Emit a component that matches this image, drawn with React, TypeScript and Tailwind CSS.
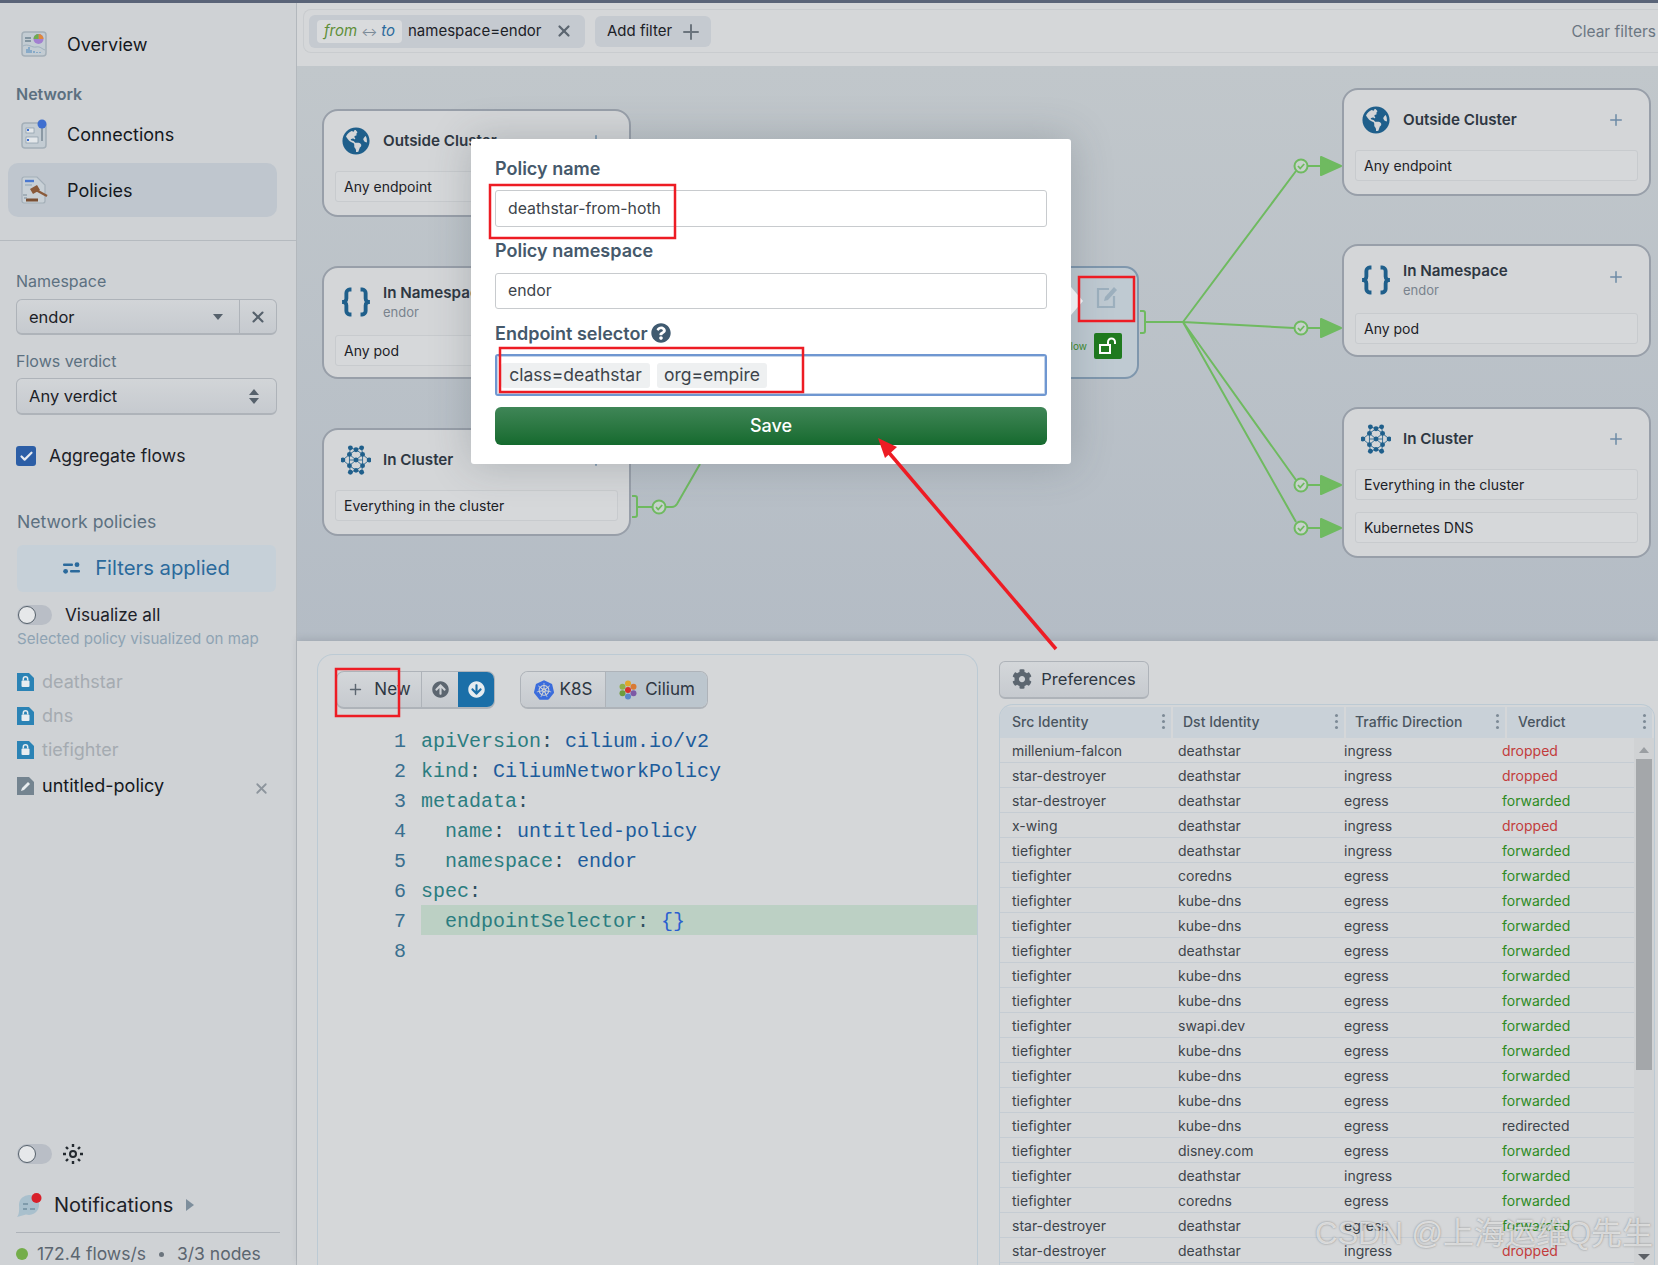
import type { ReactNode } from "react";
import { Check, Plus, X } from "lucide-react";
import { FaArrowCircleDown, FaArrowCircleUp, FaCog, FaGlobeAmericas, FaQuestionCircle } from "react-icons/fa";
import { SiKubernetes } from "react-icons/si";

function OverviewIcon() {
    return (
        <svg width="26" height="26" viewBox="0 0 26 26">
            <rect x="1" y="1" width="24" height="24" rx="3" fill="#c3ccd3" stroke="#a4afb8" strokeWidth="1.5"/>
            <path d="M4 7h6M4 10h6" stroke="#6f8291" strokeWidth="1.5"/>
            <path d="M2 15c5-3 9 2 13 1s6 2 9 3" fill="none" stroke="#9fb0bd" strokeWidth="1"/>
            <path d="M6 22v-4M8 22v-6M10 22v-3M13 22v-2M16 22v-1M19 22v-1" stroke="#6f9cc4" strokeWidth="1.4"/>
            <circle cx="17.5" cy="8" r="5" fill="#a27fd0"/>
            <path d="M17.5 8V3a5 5 0 0 1 5 5z" fill="#e0873a"/>
            <path d="M17.5 8V3a5 5 0 0 0-5 5z" fill="#6dad4e"/>
        </svg>
    );
}

function ConnectionsIcon() {
    return (
        <svg width="28" height="30" viewBox="0 0 28 30">
            <rect x="1" y="4" width="24" height="25" rx="3" fill="#c3ccd3" stroke="#a4afb8" strokeWidth="1.5"/>
            <rect x="5" y="9" width="8" height="5" fill="#e3e7ea" stroke="#8a9aa8" strokeWidth="0.7"/>
            <rect x="5" y="18" width="12" height="6" fill="#e3e7ea" stroke="#8a9aa8" strokeWidth="0.7"/>
            <rect x="6" y="10" width="2" height="2" fill="#3f6fd0"/>
            <rect x="6" y="20" width="2" height="2" fill="#3f6fd0"/>
            <path d="M21 8v14" stroke="#7d8c99" strokeWidth="1.6"/>
            <circle cx="21" cy="5" r="4.5" fill="#3f6fd0"/>
        </svg>
    );
}

function PoliciesIcon() {
    return (
        <svg width="28" height="28" viewBox="0 0 28 28">
            <path d="M1 3a2 2 0 0 1 2-2h13l8 8v16a2 2 0 0 1-2 2H3a2 2 0 0 1-2-2z" fill="#c8d0d6" stroke="#a4afb8" strokeWidth="1.2"/>
            <path d="M4 5h9" stroke="#4a78d0" strokeWidth="2.4"/>
            <path d="M4 9h7" stroke="#9fb0bd" strokeWidth="1.4"/>
            <path d="M9 13l7-4 3 5-7 4z" fill="#8a5a3a"/>
            <path d="M15 14l11 6" stroke="#8a5a3a" strokeWidth="2.4"/>
            <path d="M5 24h12" stroke="#7a4f33" strokeWidth="3"/>
            <path d="M2 19h4M3 22h3" stroke="#7d8c99" strokeWidth="1"/>
        </svg>
    );
}

function FiltersIcon() {
    return (
        <svg width="17" height="12" viewBox="0 0 17 12" fill="#2b6a9c">
            <rect x="0" y="1.5" width="10" height="2.4" rx="1"/>
            <circle cx="14" cy="2.7" r="2.4"/>
            <circle cx="2.6" cy="9.3" r="2.4"/>
            <rect x="7" y="8.1" width="10" height="2.4" rx="1"/>
        </svg>
    );
}

function PolicyFileIcon({locked}: {locked: boolean}) {
    return (
        <svg width="17" height="19" viewBox="0 0 17 19">
            <path d="M0 1h12l5 5v13H0z" fill={locked ? "#2b83b5" : "#748490"}/>
            {locked ? (
                <g>
                    <rect x="4.5" y="8.5" width="8" height="6.5" rx="1" fill="#e8edf0"/>
                    <path d="M6.3 8.5V7a2.2 2.2 0 0 1 4.4 0v1.5" fill="none" stroke="#e8edf0" strokeWidth="1.5"/>
                </g>
            ) : (
                <path d="M4 15l1-3 6-6 2 2-6 6z" fill="#e8edf0"/>
            )}
        </svg>
    );
}

function NotificationIcon() {
    return (
        <svg width="26" height="25" viewBox="0 0 26 25">
            <path d="M2 12a10 10 0 1 1 7 9.5L0 24c1.500-2 2.500-4 2-12z" fill="#a9c0cd"/>
            <path d="M6 11h5M6 16h4M13 16h5" stroke="#7f9bab" strokeWidth="1.8"/>
            <circle cx="19.500" cy="5" r="5" fill="#d8202a"/>
        </svg>
    );
}

function ClusterIcon() {
    const dots = [[10, 3], [16, 5], [22, 3], [9, 10], [23, 10], [2, 16], [16, 16], [30, 16], [9, 22], [23, 22], [10, 29], [16, 27], [22, 29]];
    return (
        <svg width="32" height="32" viewBox="0 0 32 32">
            <path d="M10 3l6 2 6-2M9 10l7-5 7 5M2 16l7-6v12zM30 16l-7-6v12zM9 10l7 6 7-6M9 22l7-6 7 6M9 22l7 5 7-5M10 29l6-2 6 2M10 3l-1 7M22 3l1 7M10 29l-1-7M22 29l1-7M9 16h14" fill="none" stroke="#1f5f8b" strokeWidth="0.9"/>
            {dots.map(([x, y]) => <circle key={`${x}-${y}`} cx={x} cy={y} r="2.6" fill="#1f5f8b"/>)}
        </svg>
    );
}

function BracesIcon() {
    return (
        <svg width="34" height="30" viewBox="0 0 30 26" fill="none" stroke="#1f5f8b" strokeWidth="3.400" className="shrink-0">
            <path d="M11 2H9.500a3 3 0 0 0-3 3v5a3 3 0 0 1-3.500 3 3 3 0 0 1 3.500 3v5a3 3 0 0 0 3 3H11"/>
            <path d="M19 2h1.500a3 3 0 0 1 3 3v5a3 3 0 0 0 3.500 3 3 3 0 0 0-3.500 3v5a3 3 0 0 1-3 3H19"/>
        </svg>
    );
}

function EditIcon() {
    return (
        <svg width="22" height="24" viewBox="0 0 22 24" fill="none" className="mt-[17px] mr-[19px]">
            <path d="M13 4H2v18h16V11" stroke="#9db0be" strokeWidth="2.200"/>
            <path d="M8 16l1-4 9-10 3 3-9 10z" fill="#9db0be"/>
        </svg>
    );
}

function OpenLockIcon() {
    return (
        <svg width="20" height="18" viewBox="0 0 20 18" fill="none" stroke="white" strokeWidth="2">
            <rect x="2" y="8" width="10" height="8"/>
            <path d="M10 8V5a3.500 3.500 0 0 1 7 0v2"/>
        </svg>
    );
}

function SunIcon() {
    return (
        <svg width="20" height="20" viewBox="0 0 20 20" fill="none" stroke="#23292f" strokeWidth="2.400">
            <circle cx="10" cy="10" r="3" strokeWidth="2"/>
            <path d="M10 0v3M10 17v3M0 10h3M17 10h3M3 3l2 2M15 15l2 2M3 17l2-2M15 5l2-2"/>
        </svg>
    );
}

function CiliumIcon() {
    return (
        <svg width="20" height="20" viewBox="0 0 20 20">
            <circle cx="10" cy="3.500" r="3" fill="#e0a82e"/>
            <circle cx="15.500" cy="6.800" r="3" fill="#d97a34"/>
            <circle cx="15.500" cy="13.200" r="3" fill="#7d5aa6"/>
            <circle cx="10" cy="16.500" r="3" fill="#5b86c9"/>
            <circle cx="4.500" cy="13.200" r="3" fill="#6f9c3e"/>
            <circle cx="4.500" cy="6.800" r="3" fill="#8fb04a"/>
            <circle cx="10" cy="10" r="3" fill="#d8302c"/>
        </svg>
    );
}

function Toggle() {
    return (
        <div className="w-[35px] h-[20px] rounded-full bg-[#b9bec6] flex items-center">
            <div className="w-[18px] h-[18px] ml-px rounded-full bg-[#e6e8ea] border border-[#55606a]"></div>
        </div>
    );
}

interface NodeCardProps {
    title: string
    sub?: string
    icon: ReactNode
    items: string[]
    className: string
}

function NodeCard(props: NodeCardProps) {
    return (
        <div className={`absolute w-[309px] bg-[#d4d6d8] border-2 border-[#989fa9] rounded-[16px] px-[11px] ${props.sub ? "pb-[11px]" : "pb-[13px]"} ${props.className}`}>
            <div className={`flex items-center ${props.sub ? "h-[67px]" : "h-[60px]"}`}>
                <div className="w-[30px] ml-[6px] flex justify-center">{props.icon}</div>
                <div className="ml-[12px] flex-1">
                    <div className="text-[15.200px] leading-[20px] font-semibold text-[#2e3742]">{props.title}</div>
                    {props.sub && <div className="text-[13px] leading-[18px] text-[#79838d]">{props.sub}</div>}
                </div>
                <Plus size={18} strokeWidth={2} className={`text-[#6d8ba6] mr-[13px] ${props.sub ? "mb-[6px]" : ""}`}/>
            </div>
            <div className="flex flex-col gap-[12px]">
                {props.items.map((item) => (
                    <div key={item} className="h-[31px] flex items-center px-[8px] bg-[#d6d8da] border border-[#c8cbce] rounded-[3px] text-[14px] text-[#1c2127]">
                        {item}
                    </div>
                ))}
            </div>
        </div>
    );
}

const codeLines: {indent?: boolean, k: string, v?: string, brace?: boolean}[] = [
    {k: "apiVersion", v: "cilium.io/v2"},
    {k: "kind", v: "CiliumNetworkPolicy"},
    {k: "metadata"},
    {indent: true, k: "name", v: "untitled-policy"},
    {indent: true, k: "namespace", v: "endor"},
    {k: "spec"},
    {indent: true, k: "endpointSelector", brace: true},
];

const flows = [
    ["millenium-falcon", "deathstar", "ingress", "dropped"],
    ["star-destroyer", "deathstar", "ingress", "dropped"],
    ["star-destroyer", "deathstar", "egress", "forwarded"],
    ["x-wing", "deathstar", "ingress", "dropped"],
    ["tiefighter", "deathstar", "ingress", "forwarded"],
    ["tiefighter", "coredns", "egress", "forwarded"],
    ["tiefighter", "kube-dns", "egress", "forwarded"],
    ["tiefighter", "kube-dns", "egress", "forwarded"],
    ["tiefighter", "deathstar", "egress", "forwarded"],
    ["tiefighter", "kube-dns", "egress", "forwarded"],
    ["tiefighter", "kube-dns", "egress", "forwarded"],
    ["tiefighter", "swapi.dev", "egress", "forwarded"],
    ["tiefighter", "kube-dns", "egress", "forwarded"],
    ["tiefighter", "kube-dns", "egress", "forwarded"],
    ["tiefighter", "kube-dns", "egress", "forwarded"],
    ["tiefighter", "kube-dns", "egress", "redirected"],
    ["tiefighter", "disney.com", "egress", "forwarded"],
    ["tiefighter", "deathstar", "ingress", "forwarded"],
    ["tiefighter", "coredns", "egress", "forwarded"],
    ["star-destroyer", "deathstar", "egress", "forwarded"],
    ["star-destroyer", "deathstar", "ingress", "dropped"],
];

function verdictColor(verdict: string) {
    if (verdict === "dropped") return "text-[#c23c3c]";
    if (verdict === "forwarded") return "text-[#2e8b1f]";
    return "text-[#3d444b]";
}

function FlowDot({x, y}: {x: number, y: number}) {
    return (
        <g>
            <circle cx={x} cy={y} r="6.500" fill="#c8d2cc" stroke="#6fba60" strokeWidth="2"/>
            <path d={`M${x - 3} ${y}l2.200 2.500 4-4.500`} fill="none" stroke="#6fba60" strokeWidth="1.800"/>
        </g>
    );
}

function Sidebar() {
    return (
        <aside className="w-[297px] shrink-0 h-[1262px] bg-[#cfd2d5] border-r border-[#b3b8bd] flex flex-col pt-[14px] pb-px overflow-hidden">
            <div className="h-[54px] flex items-center pl-[21px] gap-[20px] text-[18px] text-[#14181d]">
                <OverviewIcon/>Overview
            </div>
            <div className="mt-[13px] ml-[16px] h-[20px] leading-[20px] text-[16px] font-semibold text-[#5c7080]">Network</div>
            <div className="mt-[3px] h-[54px] flex items-center pl-[21px] gap-[18px] text-[18px] text-[#14181d]">
                <ConnectionsIcon/>Connections
            </div>
            <div className="mt-[2px] mx-[8px] w-[269px] h-[54px] flex items-center pl-[13px] gap-[18px] rounded-[10px] bg-[#bfc6ce] text-[18px] text-[#14181d]">
                <PoliciesIcon/>Policies
            </div>
            <div className="mt-[23px] h-px bg-[#b5babf]"></div>

            <div className="mt-[30px] ml-[16px] h-[20px] leading-[20px] text-[16px] text-[#5c7080]">Namespace</div>
            <div className="mt-[8px] mx-[16px] w-[261px] h-[36px] flex rounded-[6px] border border-[#aeb3b9] border-b-2 bg-gradient-to-b from-[#d2d5d8] to-[#c6cacf] text-[16.500px] text-[#1c2127]">
                <div className="flex-1 flex items-center justify-between pl-[12px] pr-[16px] pt-px border-r border-[#aeb3b9]">
                    endor
                    <div className="w-0 h-0 border-x-[5px] border-x-transparent border-t-[6px] border-t-[#56616c]"></div>
                </div>
                <div className="w-[36px] flex items-center justify-center"><X size={18} strokeWidth={2.800} className="text-[#56616c]"/></div>
            </div>
            <div className="mt-[16px] ml-[16px] h-[20px] leading-[20px] text-[16px] text-[#5c7080]">Flows verdict</div>
            <div className="mt-[7px] mx-[16px] w-[261px] h-[37px] flex items-center justify-between pl-[12px] pr-[17px] rounded-[6px] border border-[#aeb3b9] border-b-2 bg-gradient-to-b from-[#d2d5d8] to-[#c6cacf] text-[16.500px] text-[#1c2127]">
                Any verdict
                <div className="flex flex-col gap-[3px]">
                    <div className="w-0 h-0 border-x-[5px] border-x-transparent border-b-[6px] border-b-[#56616c]"></div>
                    <div className="w-0 h-0 border-x-[5px] border-x-transparent border-t-[6px] border-t-[#56616c]"></div>
                </div>
            </div>
            <div className="mt-[31px] ml-[16px] h-[20px] flex items-center gap-[13px] text-[17.600px] text-[#1c2127]">
                <div className="w-[20px] h-[20px] rounded-[3px] bg-[#2c5ea6] flex items-center justify-center">
                    <Check size={15} strokeWidth={3.500} className="text-[#e6eaf0]"/>
                </div>
                <span className="pt-px">Aggregate flows</span>
            </div>

            <div className="mt-[46px] ml-[17px] h-[20px] leading-[20px] text-[17.600px] text-[#5c7080]">Network policies</div>
            <div className="mt-[13px] ml-[17px] w-[259px] h-[47px] flex items-center justify-center gap-[15px] pb-px rounded-[6px] bg-[#c6d0d8] text-[20.300px] text-[#2b6a9c]">
                <FiltersIcon/>Filters applied
            </div>
            <div className="mt-[13px] ml-[17px] h-[20px] flex items-center gap-[13px] text-[17.200px] text-[#1c2127]">
                <Toggle/>Visualize all
            </div>
            <div className="mt-[5px] ml-[17px] h-[18px] leading-[18px] text-[15.100px] text-[#8ea3b3]">Selected policy visualized on map</div>
            <div className="mt-[16px] ml-[17px] flex flex-col">
                {["deathstar", "dns", "tiefighter"].map((name) => (
                    <div key={name} className="h-[34px] flex items-center gap-[8px] text-[18px] text-[#a5abb1]">
                        <PolicyFileIcon locked={true}/>{name}
                    </div>
                ))}
                <div className="mt-[2px] h-[34px] flex items-center gap-[8px] text-[18px] text-[#14181d]">
                    <PolicyFileIcon locked={false}/>untitled-policy
                    <X size={17} strokeWidth={2.500} className="ml-[81px] mt-[6px] text-[#8d959d]"/>
                </div>
            </div>

            <div className="mt-auto ml-[17px] h-[20px] flex items-center gap-[11px]">
                <Toggle/>
                <SunIcon/>
            </div>
            <div className="mt-[29px] ml-[17px] h-[24px] flex items-center gap-[11px] text-[20px] text-[#1c2127]">
                <NotificationIcon/>
                Notifications
                <div className="w-0 h-0 ml-[2px] border-y-[6px] border-y-transparent border-l-[8px] border-l-[#7d8e9c]"></div>
            </div>
            <div className="mt-[15px] mx-[16px] h-px bg-[#aeb3b9]"></div>
            <div className="mt-[11px] ml-[16px] h-[20px] flex items-center text-[17.500px] text-[#5c6670]">
                <div className="w-[12px] h-[12px] rounded-full bg-[#74ad4a] mr-[9px]"></div>
                172.4 flows/s
                <div className="w-[5px] h-[5px] rounded-full bg-[#6b747d] mx-[13px]"></div>
                3/3 nodes
            </div>
        </aside>
    );
}

function FilterBar() {
    return (
        <div className="h-[63px] bg-[#d5d7d9] pt-[6px] pl-[6px]">
            <div className="h-[44px] flex items-center rounded-l-[8px] border border-r-0 border-[#c9cccf] pl-[5px] pr-[2px] text-[15px] text-[#1c2127]">
                <div className="w-[276px] h-[33px] flex items-center rounded-[6px] bg-[#c5cad0] pl-[8px] pt-px">
                    <div className="w-[85px] h-[23px] flex items-center justify-center gap-[4px] rounded-[4px] bg-[#d9dbdd] italic">
                        <span className="text-[#5f8f3a]">from</span>
                        <span className="not-italic text-[12px] text-[#7a8a98]">↔</span>
                        <span className="text-[#2b6a9c]">to</span>
                    </div>
                    <span className="ml-[6px]">namespace=endor</span>
                    <X size={18} strokeWidth={3} className="ml-[13px] -mt-[2px] text-[#5c6670]"/>
                </div>
                <div className="ml-[10px] w-[116px] h-[31px] flex items-center rounded-[6px] bg-[#c5cad0] pl-[12px] pt-px gap-[7px]">
                    Add filter
                    <Plus size={24} strokeWidth={2} className="text-[#6b747d]"/>
                </div>
                <div className="ml-auto pt-px text-[15.500px] text-[#6b7682]">Clear filters</div>
            </div>
        </div>
    );
}

function FlowMap() {
    return (
        <div className="relative h-[575px] bg-gradient-to-b from-[#c1c7cb] to-[#b4bcc5] overflow-hidden">
            <NodeCard className="left-[25px] top-[43px]" title="Outside Cluster" icon={<FaGlobeAmericas size={28} className="text-[#1f5f8b]"/>} items={["Any endpoint"]}/>
            <NodeCard className="left-[25px] top-[200px]" title="In Namespace" sub="endor" icon={<BracesIcon/>} items={["Any pod"]}/>
            <NodeCard className="left-[25px] top-[362px]" title="In Cluster" icon={<ClusterIcon/>} items={["Everything in the cluster"]}/>

            <div className="absolute left-[700px] top-[200px] w-[142px] h-[113px] rounded-[14px] border-2 border-[#7f97ad] bg-[#bfcad2] flex flex-col items-end">
                <EditIcon/>
                <div className="mt-[24px] mr-[15px] flex items-center gap-[7px]">
                    <span className="text-[10px] text-[#3c8a2e]">Allow</span>
                    <div className="w-[28px] h-[26px] rounded-[2px] bg-[#1f7a1f] flex items-center justify-center">
                        <OpenLockIcon/>
                    </div>
                </div>
            </div>

            <NodeCard className="left-[1045px] top-[22px]" title="Outside Cluster" icon={<FaGlobeAmericas size={28} className="text-[#1f5f8b]"/>} items={["Any endpoint"]}/>
            <NodeCard className="left-[1045px] top-[178px]" title="In Namespace" sub="endor" icon={<BracesIcon/>} items={["Any pod"]}/>
            <NodeCard className="left-[1045px] top-[341px]" title="In Cluster" icon={<ClusterIcon/>} items={["Everything in the cluster", "Kubernetes DNS"]}/>

            <svg className="absolute inset-0 pointer-events-none" width="1361" height="575" viewBox="297 66 1361 575" fill="none">
                <g stroke="#6fba60" strokeWidth="2">
                    <path d="M632 496h3a2 2 0 0 1 2 2v17a2 2 0 0 1-2 2h-3M637 507h16M665 507h7q3 0 5-3l23-40"/>
                    <path d="M1140 311h3a2 2 0 0 1 2 2v18a2 2 0 0 1-2 2h-3M1145 322h38"/>
                    <path d="M1183 322L1296 171M1183 322L1294 328M1183 322L1296 480M1183 322L1296 522"/>
                    <path d="M1308 166h12M1308 328h12M1308 485h12M1308 528h12"/>
                </g>
                <FlowDot x={659} y={507}/>
                <FlowDot x={1301} y={166}/>
                <FlowDot x={1301} y={328}/>
                <FlowDot x={1301} y={485}/>
                <FlowDot x={1301} y={528}/>
                <g fill="#6fba60" stroke="#6fba60" strokeWidth="2" strokeLinejoin="round">
                    <path d="M1321 157l20 9-20 9z"/>
                    <path d="M1321 319l20 9-20 9z"/>
                    <path d="M1321 476l20 9-20 9z"/>
                    <path d="M1321 519l20 9-20 9z"/>
                </g>
            </svg>
        </div>
    );
}

function PolicyEditor() {
    return (
        <div className="w-[661px] shrink-0 mt-[13px] ml-[20px] rounded-t-[16px] border border-b-0 border-[#bccad4]">
            <div className="mt-[16px] ml-[18px] flex text-[17px] text-[#2e3742] gap-[25px]">
                <div className="h-[38px] flex rounded-[8px] border border-[#aeb3b9] border-b-2 overflow-hidden bg-gradient-to-b from-[#d4d7da] to-[#c6cacf]">
                    <div className="w-[85px] flex items-center justify-center gap-[10px] border-r border-[#aeb3b9]">
                        <Plus size={17} strokeWidth={2} className="text-[#5c6670]"/>New
                    </div>
                    <div className="w-[36px] flex items-center justify-center">
                        <FaArrowCircleUp size={17} className="text-[#5c6670]"/>
                    </div>
                    <div className="w-[36px] flex items-center justify-center bg-[#1b6fa8]">
                        <FaArrowCircleDown size={17} className="text-[#e6ecf0]"/>
                    </div>
                </div>
                <div className="h-[38px] flex rounded-[8px] border border-[#aeb3b9] border-b-2 overflow-hidden">
                    <div className="w-[85px] flex items-center justify-center gap-[6px] border-r border-[#aeb3b9] bg-gradient-to-b from-[#d4d7da] to-[#c6cacf]">
                        <SiKubernetes size={20} className="text-[#3a6cdc]"/>K8S
                    </div>
                    <div className="w-[101px] flex items-center justify-center gap-[7px] bg-[#bcc6ce]">
                        <CiliumIcon/>Cilium
                    </div>
                </div>
            </div>
            <div className="mt-[18px] text-[20px] leading-[30px] [font-family:'Liberation_Mono',monospace]">
                {codeLines.map((line, i) => (
                    <div key={line.k} className="flex h-[30px]">
                        <div className="w-[88px] text-right text-[#3a6f8f]">{i + 1}</div>
                        <div className={`ml-[15px] flex-1 whitespace-pre ${i === 6 ? "-mt-[2px] h-[30px] pt-[2px] bg-[#bcd0c4]" : ""}`}>
                            <span className="text-[#2b7d80]">{line.indent ? "  " : ""}{line.k}</span>
                            <span className="text-[#2f4f5f]">:</span>
                            {line.v && <span className="text-[#1d5c9c]"> {line.v}</span>}
                            {line.brace && <span className="text-[#2a5fd0]"> {"{}"}</span>}
                        </div>
                    </div>
                ))}
                <div className="flex h-[30px]">
                    <div className="w-[88px] text-right text-[#3a6f8f]">8</div>
                </div>
            </div>
        </div>
    );
}

function FlowsTable() {
    const headers = [
        {name: "Src Identity", cls: "w-[173px] pl-[12px]"},
        {name: "Dst Identity", cls: "w-[173px] pl-[10px]"},
        {name: "Traffic Direction", cls: "w-[161px] pl-[9px]"},
        {name: "Verdict", cls: "flex-1 pl-[11px]"},
    ];
    return (
        <div className="w-[656px] shrink-0 ml-[21px] mt-[20px]">
            <div className="w-[150px] h-[38px] flex items-center justify-center gap-[9px] pb-px rounded-[6px] border border-[#aeb3b9] border-b-2 bg-gradient-to-b from-[#d4d7da] to-[#c6cacf] text-[16.500px] text-[#2e3742]">
                <FaCog size={20} className="text-[#5c6670]"/>Preferences
            </div>
            <div className="mt-[5px] rounded-t-[14px] border border-b-0 border-[#bccad4] pt-[2px] overflow-hidden">
                <div className="h-[31px] flex bg-[#c9d1d8] text-[14px] font-medium text-[#4a5560]">
                    {headers.map((h) => (
                        <div key={h.name} className={`flex items-center justify-between pr-[6px] pb-[3px] border-r-2 border-[#d5d7d9] ${h.cls}`}>
                            {h.name}
                            <div className="flex flex-col gap-[3px]">
                                <div className="w-[3px] h-[3px] rounded-full bg-[#7d8a96]"></div>
                                <div className="w-[3px] h-[3px] rounded-full bg-[#7d8a96]"></div>
                                <div className="w-[3px] h-[3px] rounded-full bg-[#7d8a96]"></div>
                            </div>
                        </div>
                    ))}
                </div>
                <div className="flex">
                    <div className="w-[634px] shrink-0">
                        {flows.map((row, i) => (
                            <div key={i} className="h-[25px] flex items-center border-b border-[#c5ccd3] text-[14px] text-[#3d444b]">
                                <div className="w-[178px] pl-[12px]">{row[0]}</div>
                                <div className="w-[166px]">{row[1]}</div>
                                <div className="w-[158px]">{row[2]}</div>
                                <div className={verdictColor(row[3])}>{row[3]}</div>
                            </div>
                        ))}
                    </div>
                    <div className="flex-1 bg-[#d0d2d4] flex flex-col items-center h-[527px]">
                        <div className="mt-[9px] w-0 h-0 border-x-[5px] border-x-transparent border-b-[6px] border-b-[#9a9ea2]"></div>
                        <div className="mt-[6px] w-[16px] h-[311px] bg-[#a4a7aa]"></div>
                        <div className="mt-auto mb-[5px] w-0 h-0 border-x-[6px] border-x-transparent border-t-[6px] border-t-[#5c6066]"></div>
                    </div>
                </div>
            </div>
        </div>
    );
}

function PolicyModal() {
    return (
        <div className="absolute left-[471px] top-[139px] w-[600px] bg-white rounded-[3px] px-[24px] pt-[18px] pb-[19px] shadow-[0_0_40px_rgba(60,70,80,0.25)] text-[16px] text-[#3d444b]">
            <div className="h-[24px] leading-[24px] text-[18px] font-semibold text-[#45596b]">Policy name</div>
            <div className="mt-[9px] h-[37px] flex items-center pl-[12px] rounded-[3px] border border-[#c8cbce] text-[15.800px]">deathstar-from-hoth</div>
            <div className="mt-[12px] h-[24px] leading-[24px] text-[18px] font-semibold text-[#45596b]">Policy namespace</div>
            <div className="mt-[10px] h-[36px] flex items-center pl-[12px] rounded-[3px] border border-[#c8cbce] text-[15.800px]">endor</div>
            <div className="mt-[12px] h-[24px] flex items-center gap-[3px] text-[18px] font-semibold text-[#45596b]">
                Endpoint selector
                <FaQuestionCircle size={20} className="text-[#3f5a70]"/>
            </div>
            <div className="mt-[9px] h-[42px] flex items-center gap-[7px] pl-[4px] rounded-[3px] border-2 border-[#6f97d1] shadow-[inset_0_0_0_1px_#c4d4ea] text-[17.500px]">
                <div className="w-[149px] h-[25px] flex items-center justify-center rounded-[3px] bg-[#eef0f1]">class=deathstar</div>
                <div className="w-[110px] h-[25px] flex items-center justify-center rounded-[3px] bg-[#eef0f1]">org=empire</div>
            </div>
            <div className="mt-[11px] h-[38px] flex items-center justify-center pb-px rounded-[6px] bg-gradient-to-b from-[#3f8657] to-[#146a2e] text-[18px] font-medium text-white">Save</div>
        </div>
    );
}

function Annotations() {
    return (
        <svg className="absolute inset-0 pointer-events-none" width="1658" height="1265" viewBox="0 0 1658 1265" fill="none">
            <path d="M1071 287l12 14-12 14z" fill="#e8ecef"/>
            <g stroke="#ed1c24" strokeWidth="2.500">
                <rect x="490" y="185" width="185" height="53"/>
                <rect x="500" y="348" width="303" height="44"/>
                <rect x="1079" y="277" width="55" height="44"/>
                <rect x="336" y="669" width="63" height="47"/>
            </g>
            <path d="M1056 649L885 448" stroke="#ed1c24" strokeWidth="3.500"/>
            <path d="M878 438l19 9-12 11z" fill="#ed1c24"/>
        </svg>
    );
}

export default function App() {
    return (
        <div className="relative w-[1658px] h-[1265px] overflow-hidden bg-[#d5d7d9] [font-family:Inter,sans-serif]">
            <div className="h-[3px] bg-[#5a6478]"></div>
            <div className="flex">
                <Sidebar/>
                <main className="flex-1 min-w-0">
                    <FilterBar/>
                    <FlowMap/>
                    <div className="h-[624px] flex overflow-hidden shadow-[0_-3px_6px_rgba(80,90,100,0.15)] relative">
                        <PolicyEditor/>
                        <FlowsTable/>
                    </div>
                </main>
            </div>
            <PolicyModal/>
            <Annotations/>
            <div className="absolute left-[1315px] top-[1215px] text-[31px] leading-[38px] text-white/65 [text-shadow:0_0_2px_rgba(70,70,70,0.6)] [font-family:'Liberation_Sans','Noto_Sans_CJK_SC',sans-serif]">
                CSDN @上海运维Q先生
            </div>
        </div>
    );
}
